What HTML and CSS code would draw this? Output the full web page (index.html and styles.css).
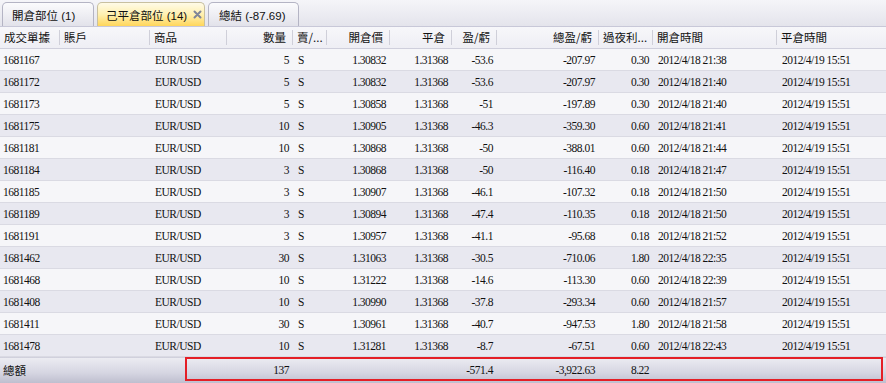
FILE: index.html
```
<!DOCTYPE html>
<html>
<head>
<meta charset="utf-8">
<link rel="stylesheet" href="styles.css">
</head>
<body>
<div class="panel">
  <div class="tabbar">
    <div class="tab tab1">開倉部位 (1)</div>
    <div class="tab active">己平倉部位 (14)<svg class="close" width="9" height="9" viewBox="0 0 9 9"><path d="M1.5 1.5L7.5 7.5M7.5 1.5L1.5 7.5" stroke="#7f8598" stroke-width="2" stroke-linecap="round"/></svg></div>
    <div class="tab tab3">總結 (-87.69)</div>
  </div>
  <table class="grid">
    <colgroup>
      <col style="width:60px"><col style="width:90px"><col style="width:77px"><col style="width:66px"><col style="width:34px"><col style="width:63px"><col style="width:62px"><col style="width:45px"><col style="width:102px"><col style="width:54px"><col style="width:124px"><col style="width:109px">
    </colgroup>
    <thead>
      <tr>
        <th><span>成交單據</span></th>
        <th><span>賬戶</span></th>
        <th><span>商品</span></th>
        <th class="r"><span>數量</span></th>
        <th><span>賣/...</span></th>
        <th class="r"><span>開倉價</span></th>
        <th class="r"><span>平倉</span></th>
        <th class="r"><span>盈/虧</span></th>
        <th class="r"><span>總盈/虧</span></th>
        <th><span>過夜利...</span></th>
        <th><span>開倉時間</span></th>
        <th class="last"><span>平倉時間</span></th>
      </tr>
    </thead>
    <tbody>
      <tr><td>1681167</td><td></td><td>EUR/USD</td><td class="r">5</td><td>S</td><td class="r">1.30832</td><td class="r">1.31368</td><td class="r">-53.6</td><td class="r">-207.97</td><td class="r">0.30</td><td>2012/4/18 21:38</td><td>2012/4/19 15:51</td></tr>
      <tr><td>1681172</td><td></td><td>EUR/USD</td><td class="r">5</td><td>S</td><td class="r">1.30832</td><td class="r">1.31368</td><td class="r">-53.6</td><td class="r">-207.97</td><td class="r">0.30</td><td>2012/4/18 21:40</td><td>2012/4/19 15:51</td></tr>
      <tr><td>1681173</td><td></td><td>EUR/USD</td><td class="r">5</td><td>S</td><td class="r">1.30858</td><td class="r">1.31368</td><td class="r">-51</td><td class="r">-197.89</td><td class="r">0.30</td><td>2012/4/18 21:40</td><td>2012/4/19 15:51</td></tr>
      <tr><td>1681175</td><td></td><td>EUR/USD</td><td class="r">10</td><td>S</td><td class="r">1.30905</td><td class="r">1.31368</td><td class="r">-46.3</td><td class="r">-359.30</td><td class="r">0.60</td><td>2012/4/18 21:41</td><td>2012/4/19 15:51</td></tr>
      <tr><td>1681181</td><td></td><td>EUR/USD</td><td class="r">10</td><td>S</td><td class="r">1.30868</td><td class="r">1.31368</td><td class="r">-50</td><td class="r">-388.01</td><td class="r">0.60</td><td>2012/4/18 21:44</td><td>2012/4/19 15:51</td></tr>
      <tr><td>1681184</td><td></td><td>EUR/USD</td><td class="r">3</td><td>S</td><td class="r">1.30868</td><td class="r">1.31368</td><td class="r">-50</td><td class="r">-116.40</td><td class="r">0.18</td><td>2012/4/18 21:47</td><td>2012/4/19 15:51</td></tr>
      <tr><td>1681185</td><td></td><td>EUR/USD</td><td class="r">3</td><td>S</td><td class="r">1.30907</td><td class="r">1.31368</td><td class="r">-46.1</td><td class="r">-107.32</td><td class="r">0.18</td><td>2012/4/18 21:50</td><td>2012/4/19 15:51</td></tr>
      <tr><td>1681189</td><td></td><td>EUR/USD</td><td class="r">3</td><td>S</td><td class="r">1.30894</td><td class="r">1.31368</td><td class="r">-47.4</td><td class="r">-110.35</td><td class="r">0.18</td><td>2012/4/18 21:50</td><td>2012/4/19 15:51</td></tr>
      <tr><td>1681191</td><td></td><td>EUR/USD</td><td class="r">3</td><td>S</td><td class="r">1.30957</td><td class="r">1.31368</td><td class="r">-41.1</td><td class="r">-95.68</td><td class="r">0.18</td><td>2012/4/18 21:52</td><td>2012/4/19 15:51</td></tr>
      <tr><td>1681462</td><td></td><td>EUR/USD</td><td class="r">30</td><td>S</td><td class="r">1.31063</td><td class="r">1.31368</td><td class="r">-30.5</td><td class="r">-710.06</td><td class="r">1.80</td><td>2012/4/18 22:35</td><td>2012/4/19 15:51</td></tr>
      <tr><td>1681468</td><td></td><td>EUR/USD</td><td class="r">10</td><td>S</td><td class="r">1.31222</td><td class="r">1.31368</td><td class="r">-14.6</td><td class="r">-113.30</td><td class="r">0.60</td><td>2012/4/18 22:39</td><td>2012/4/19 15:51</td></tr>
      <tr><td>1681408</td><td></td><td>EUR/USD</td><td class="r">10</td><td>S</td><td class="r">1.30990</td><td class="r">1.31368</td><td class="r">-37.8</td><td class="r">-293.34</td><td class="r">0.60</td><td>2012/4/18 21:57</td><td>2012/4/19 15:51</td></tr>
      <tr><td>1681411</td><td></td><td>EUR/USD</td><td class="r">30</td><td>S</td><td class="r">1.30961</td><td class="r">1.31368</td><td class="r">-40.7</td><td class="r">-947.53</td><td class="r">1.80</td><td>2012/4/18 21:58</td><td>2012/4/19 15:51</td></tr>
      <tr><td>1681478</td><td></td><td>EUR/USD</td><td class="r">10</td><td>S</td><td class="r">1.31281</td><td class="r">1.31368</td><td class="r">-8.7</td><td class="r">-67.51</td><td class="r">0.60</td><td>2012/4/18 22:43</td><td>2012/4/19 15:51</td></tr>
    </tbody>
    <tfoot>
      <tr><td class="cjk">總額</td><td></td><td></td><td class="r">137</td><td></td><td></td><td></td><td class="r">-571.4</td><td class="r">-3,922.63</td><td class="r">8.22</td><td></td><td></td></tr>
    </tfoot>
  </table>
  <div class="highlight"></div>
</div>
</body>
</html>
```
FILE: styles.css
```
html, body {
  margin: 0;
  padding: 0;
  background: #f0f0f5;
}
.panel {
  position: relative;
  width: 886px;
  height: 383px;
  overflow: hidden;
  background: #f0f0f5;
}
.tabbar {
  height: 27px;
  box-sizing: border-box;
  display: flex;
  align-items: flex-end;
  gap: 3px;
  padding-left: 2px;
  background: linear-gradient(#f5f5f9, #e4e4ec);
  border-bottom: 1px solid #c8c8d8;
}
.tab {
  height: 24px;
  box-sizing: border-box;
  border: 1px solid #b4b4c4;
  border-bottom: none;
  border-radius: 5px 5px 0 0;
  background: linear-gradient(#fbfbfd, #e2e2ea);
  font-family: "Liberation Sans", "Noto Sans CJK TC", sans-serif;
  font-size: 11.5px;
  color: #111;
  display: flex;
  align-items: center;
  padding-left: 9px;
  white-space: nowrap;
}
.tab1 { width: 92px; }
.tab3 { width: 91px; padding-left: 10px; }
.tab.active {
  width: 108px;
  padding-left: 8px;
  background: linear-gradient(#fffbe8, #fff0b0 50%, #ffd65a);
  border-color: #c8c0a0;
}
.close {
  margin-left: 6px;
  flex: none;
}
.grid {
  border-collapse: collapse;
  table-layout: fixed;
  width: 886px;
  font-family: "Liberation Serif", "Noto Sans CJK TC", serif;
  font-size: 11.5px;
  letter-spacing: -0.5px;
  color: #111;
}
.grid th {
  height: 21px;
  padding: 0;
  font-family: "Noto Sans CJK TC", sans-serif;
  font-weight: normal;
  font-size: 11.5px;
  letter-spacing: 0;
  text-align: left;
  background: linear-gradient(#f7f7fa, #eeeef4);
  border-bottom: 1px solid #cfcfdc;
  white-space: nowrap;
  overflow: hidden;
}
.grid th span {
  display: block;
  padding: 0 6px 0 4px;
  border-right: 1px solid #cfcfd9;
  line-height: 15px;
}
.grid th.last span { border-right: none; }
.grid th.r { text-align: right; }
.grid td {
  height: 21px;
  padding: 0 4px 0 5px;
  border-bottom: 1px solid #dadae3;
  white-space: nowrap;
  overflow: hidden;
}
.grid td:first-child { padding-left: 3px; }
.grid td.r { text-align: right; }
.grid tbody tr:nth-child(odd) td { background: #f6f6f9; }
.grid tbody tr:nth-child(even) td { background: #e8e8f0; }
.grid tfoot td {
  height: 26px;
  border-bottom: none;
  background: linear-gradient(#ececf2, #d6d6e2 50%, #b4b4c6);
  padding-bottom: 4px;
}
.grid tfoot td.cjk {
  font-family: "Noto Sans CJK TC", sans-serif;
  letter-spacing: 0;
}
.highlight {
  position: absolute;
  left: 185px;
  top: 357px;
  width: 698px;
  height: 24px;
  box-sizing: border-box;
  border: 2px solid #e41e26;
}
```
